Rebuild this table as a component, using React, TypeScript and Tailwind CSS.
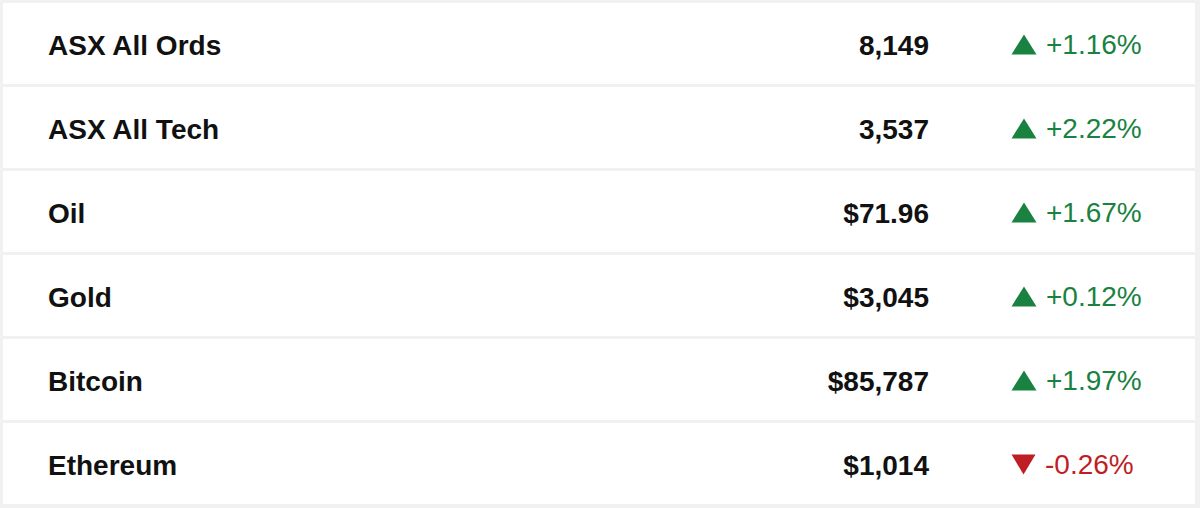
import React from "react";

type Row = { name: string; value: string; change: string; up: boolean };

const rows: Row[] = [
  { name: "ASX All Ords", value: "8,149", change: "+1.16%", up: true },
  { name: "ASX All Tech", value: "3,537", change: "+2.22%", up: true },
  { name: "Oil", value: "$71.96", change: "+1.67%", up: true },
  { name: "Gold", value: "$3,045", change: "+0.12%", up: true },
  { name: "Bitcoin", value: "$85,787", change: "+1.97%", up: true },
  { name: "Ethereum", value: "$1,014", change: "-0.26%", up: false },
];

function Tri({ up }: { up: boolean }) {
  return up ? (
    <svg width="26" height="21" viewBox="0 0 26 21" className="shrink-0">
      <polygon points="13,0.5 25.5,20.5 0.5,20.5" fill="#1a8241" />
    </svg>
  ) : (
    <svg width="25" height="21" viewBox="0 0 25 21" className="shrink-0">
      <polygon points="0.5,0.5 24.5,0.5 12.5,20.5" fill="#bf1e24" />
    </svg>
  );
}

export default function App() {
  return (
    <div
      className="w-[1200px] h-[508px] bg-[#f1f1f1] pt-[3px] pl-[3px] pr-[5px] flex flex-col gap-[3px]"
      style={{ fontFamily: '"Liberation Sans", Arial, sans-serif' }}
    >
      {rows.map((r) => (
        <div key={r.name} className="h-[81px] bg-white flex items-center pl-[45px] pt-[2px] shrink-0">
          <div className="flex-1 text-[28px] font-bold text-[#111] leading-none pt-[2px]">{r.name}</div>
          <div className="text-[28px] font-bold text-[#111] leading-none text-right mr-[82px] pt-[2px]">{r.value}</div>
          <div className="w-[184px] flex items-center gap-[9px]">
            <Tri up={r.up} />
            <span
              className={
                "text-[28px] leading-none pt-[1px] " + (r.up ? "text-[#1a8241]" : "text-[#bf1e24]")
              }
            >
              {r.change}
            </span>
          </div>
        </div>
      ))}
    </div>
  );
}
